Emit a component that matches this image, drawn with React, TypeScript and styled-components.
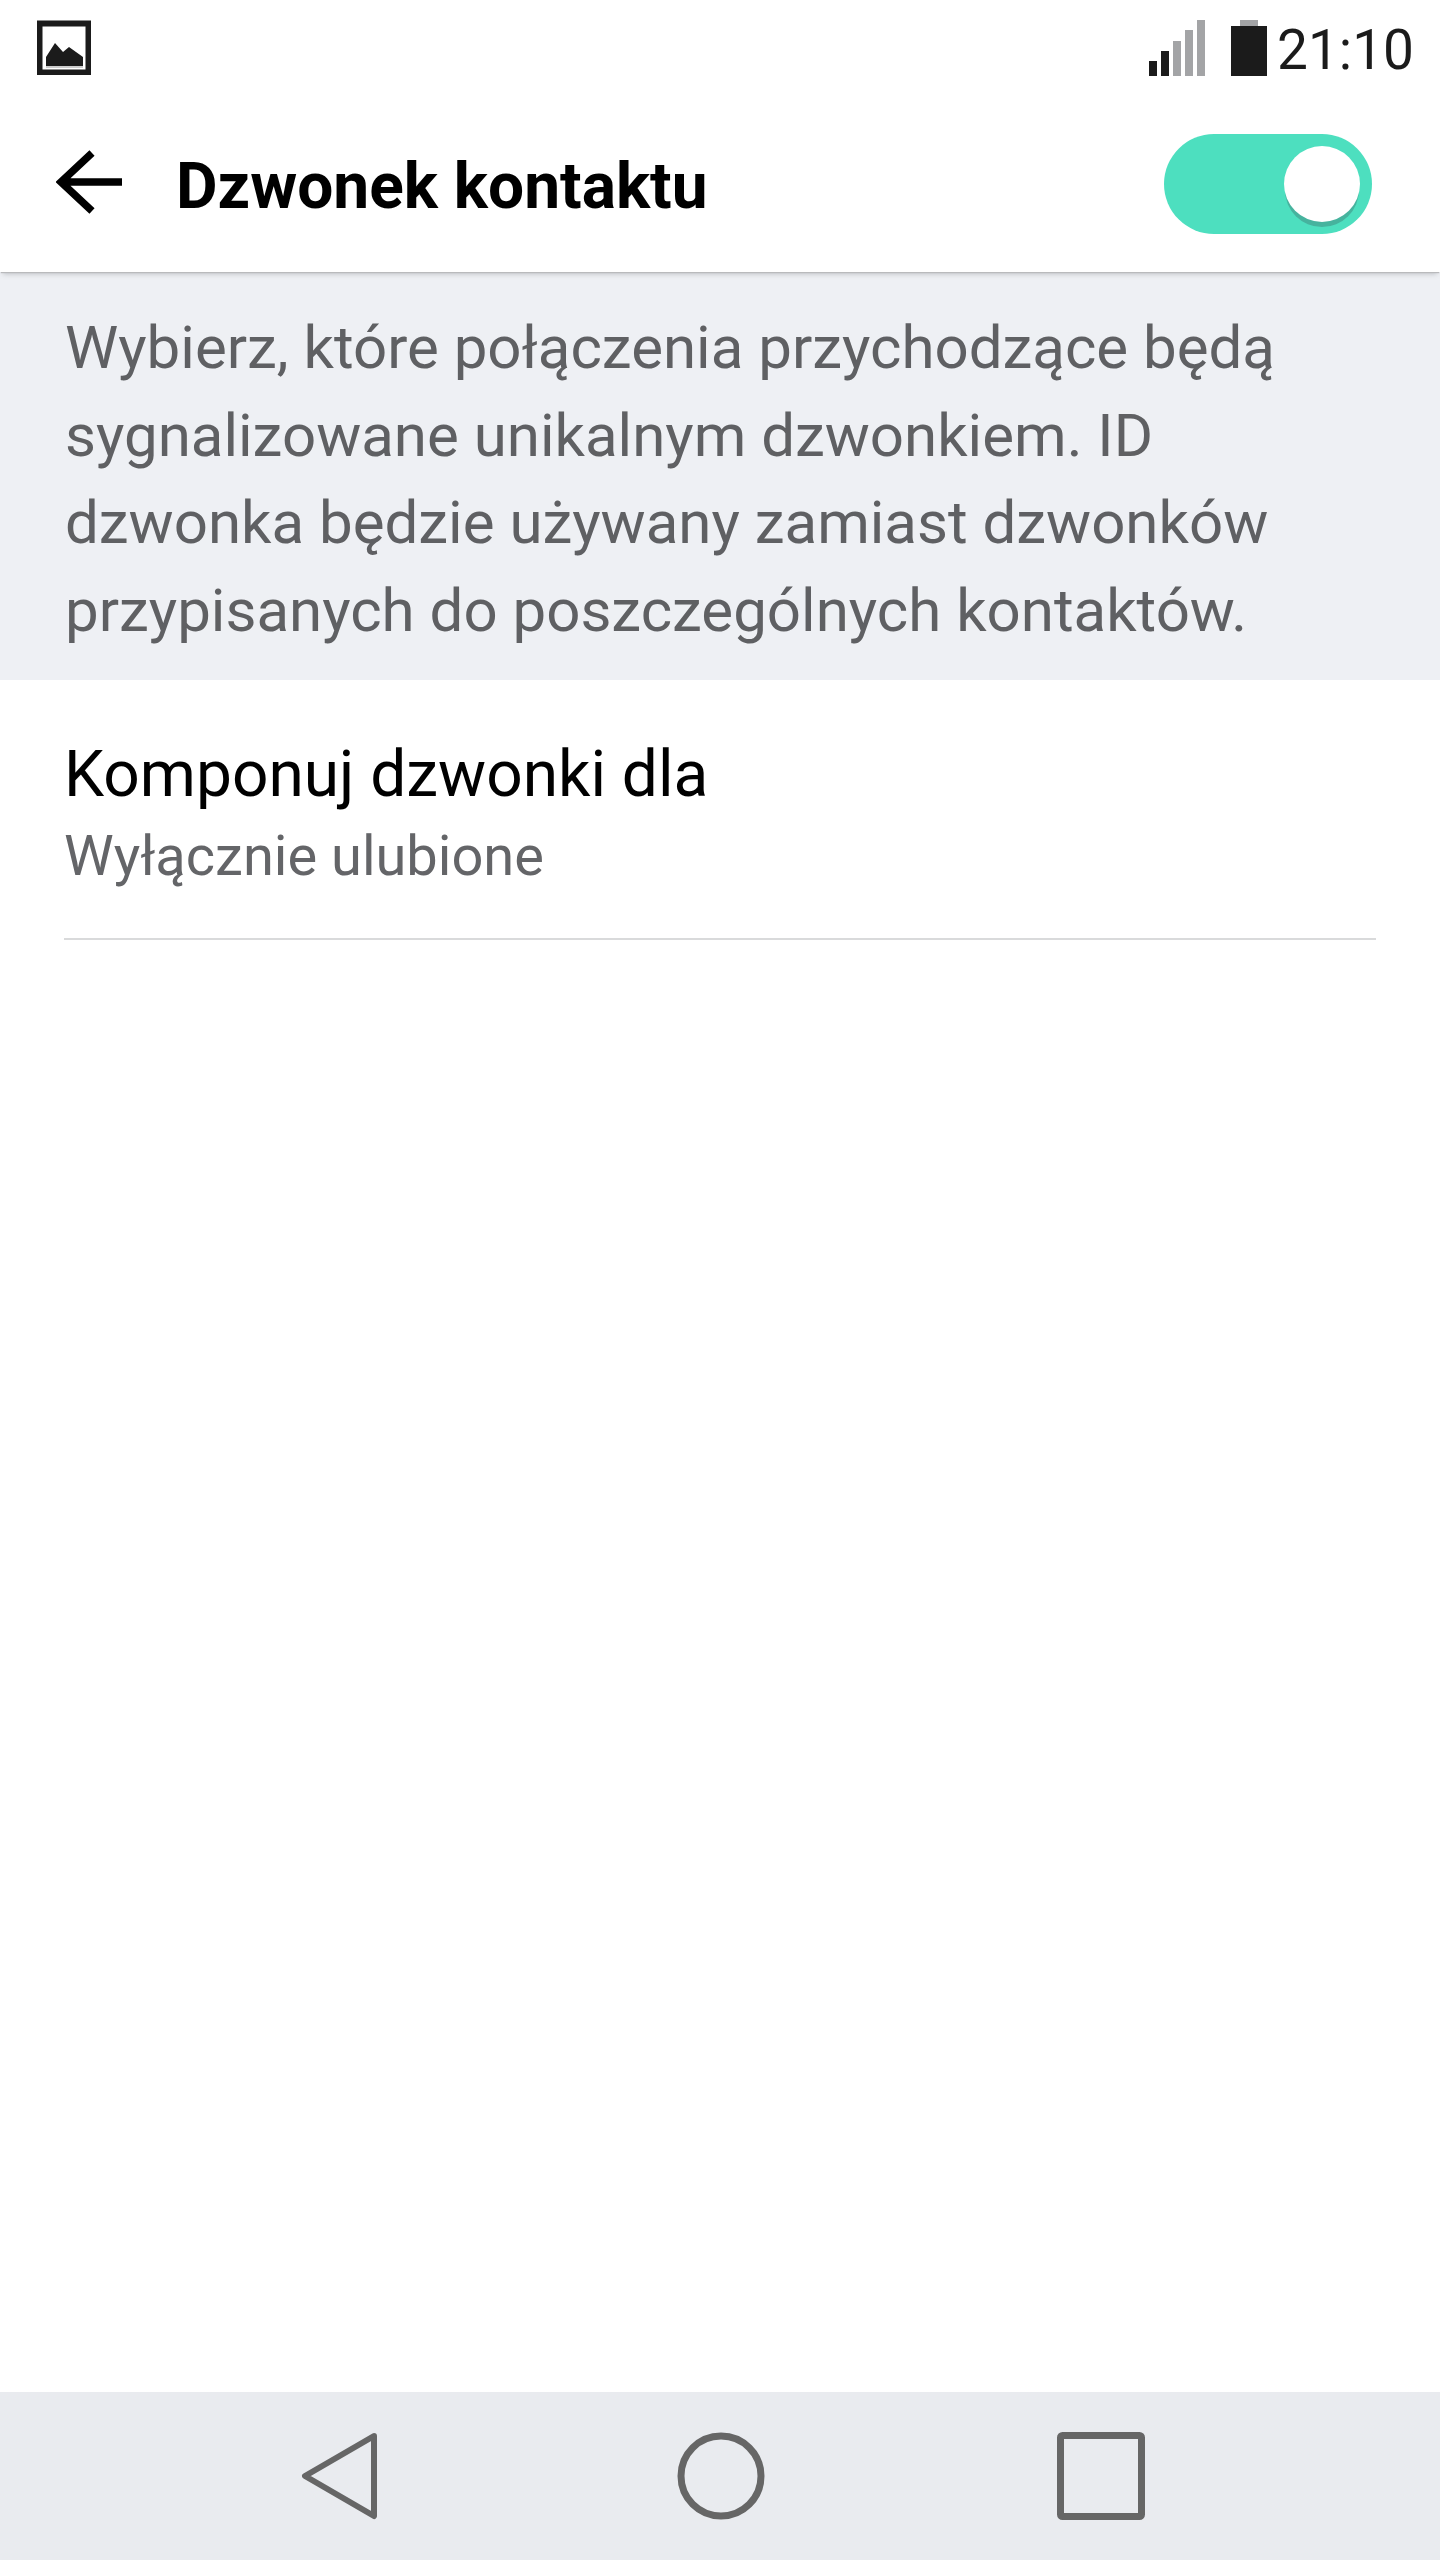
import React from "react";
import styled, { createGlobalStyle } from "styled-components";

const GlobalStyle = createGlobalStyle`
  html, body {
    margin: 0;
    padding: 0;
    background: #fff;
  }
  body {
    font-family: Roboto, "Liberation Sans", sans-serif;
  }
`;

const Screen = styled.div`
  width: 1440px;
  height: 2560px;
  display: flex;
  flex-direction: column;
  background: #fff;
  overflow: hidden;
`;

const StatusBar = styled.div`
  height: 84px;
  flex: none;
  display: flex;
  align-items: flex-start;
  justify-content: space-between;
  padding: 20px 26px 0 37px;
  box-sizing: border-box;
`;

const GalleryIcon = styled.svg`
  display: block;
`;

const StatusRight = styled.div`
  display: flex;
  align-items: flex-start;
`;

const SignalIcon = styled.svg`
  display: block;
  margin-right: 26px;
`;

const BatteryIcon = styled.svg`
  display: block;
  margin-right: 10px;
`;

const Clock = styled.span`
  font-size: 55px;
  line-height: 60px;
  color: #1b1b1b;
`;

const Toolbar = styled.div`
  position: relative;
  height: 188px;
  flex: none;
  display: flex;
  align-items: center;
  padding: 12px 68px 0 56px;
  box-sizing: border-box;
  background: #fff;
  box-shadow: 0 2px 1px -1px #b9babc, 0 5px 5px -3px rgba(120, 122, 128, 0.4);
`;

const BackIcon = styled.svg`
  display: block;
  flex: none;
  margin: -4px 54px 0 0;
`;

const Title = styled.h1`
  flex: 1;
  margin: 6px 0 0;
  font-size: 64px;
  font-weight: 700;
  line-height: 70px;
  color: #000;
`;

const Toggle = styled.div`
  position: relative;
  width: 208px;
  height: 100px;
  flex: none;
  border-radius: 50px;
  background: #4ddfbf;
`;

const Knob = styled.div`
  position: absolute;
  top: 12px;
  right: 12px;
  width: 76px;
  height: 76px;
  border-radius: 50%;
  background: #fff;
  box-shadow: 0 6px 0 -1px #46b39e;
`;

const Intro = styled.p`
  margin: 0;
  height: 408px;
  flex: none;
  padding: 32px 40px 0 65px;
  box-sizing: border-box;
  background: #eef0f4;
  font-size: 60px;
  line-height: 87.6px;
  color: #5f6063;
`;

const SettingRow = styled.div`
  flex: none;
  margin: 0 64px;
  height: 260px;
  padding-top: 60px;
  box-sizing: border-box;
  border-bottom: 2px solid #d9dadb;
`;

const RowTitle = styled.div`
  font-size: 64px;
  line-height: 70px;
  color: #000;
`;

const RowValue = styled.div`
  margin-top: 15px;
  font-size: 56px;
  line-height: 62px;
  color: #646568;
`;

const Spacer = styled.div`
  flex: 1;
`;

const NavBar = styled.div`
  height: 168px;
  flex: none;
  display: flex;
  align-items: center;
  justify-content: center;
  gap: 292px;
  padding-left: 6px;
  background: #e9ebef;
`;

const NavIcon = styled.svg`
  display: block;
  flex: none;
`;

const NavBackIcon = styled(NavIcon)`
  margin-right: 8px;
`;

function App() {
  return (
    <Screen>
      <GlobalStyle />
      <StatusBar>
        <GalleryIcon width="54" height="55" viewBox="0 0 54 55">
          <rect x="2.5" y="3.5" width="49" height="49" fill="none" stroke="#1b1b1b" strokeWidth="6" />
          <path d="M9 37 L18 23 L26 32 L32 27 L46 37 V46 H9 Z" fill="#1b1b1b" />
          <path d="M9 47 H46" stroke="#bdbdbd" strokeWidth="1.5" />
        </GalleryIcon>
        <StatusRight>
          <SignalIcon width="56" height="56" viewBox="0 0 56 56">
            <rect x="0" y="41" width="8" height="15" fill="#1b1b1b" />
            <rect x="12" y="31" width="8" height="25" fill="#1b1b1b" />
            <rect x="24" y="21" width="8" height="35" fill="#a3a4a6" />
            <rect x="36" y="10" width="8" height="46" fill="#a3a4a6" />
            <rect x="48" y="0" width="8" height="56" fill="#a3a4a6" />
          </SignalIcon>
          <BatteryIcon width="36" height="56" viewBox="0 0 36 56">
            <rect x="9" y="0" width="18" height="6" fill="#a3a4a6" />
            <rect x="0" y="6" width="36" height="50" fill="#1b1b1b" />
          </BatteryIcon>
          <Clock>21:10</Clock>
        </StatusRight>
      </StatusBar>
      <Toolbar>
        <BackIcon width="66" height="64" viewBox="0 0 66 64">
          <path d="M66 32 H8 M36 3 L5 32 L36 61" fill="none" stroke="#000" strokeWidth="7.5" />
        </BackIcon>
        <Title>Dzwonek kontaktu</Title>
        <Toggle>
          <Knob />
        </Toggle>
      </Toolbar>
      <Intro>
        Wybierz, które połączenia przychodzące będą
        <br />
        sygnalizowane unikalnym dzwonkiem. ID
        <br />
        dzwonka będzie używany zamiast dzwonków
        <br />
        przypisanych do poszczególnych kontaktów.
      </Intro>
      <SettingRow>
        <RowTitle>Komponuj dzwonki dla</RowTitle>
        <RowValue>Wyłącznie ulubione</RowValue>
      </SettingRow>
      <Spacer />
      <NavBar>
        <NavBackIcon width="76" height="88" viewBox="0 0 76 88">
          <path d="M73 4 L4 44 L73 84 Z" fill="none" stroke="#666" strokeWidth="6" strokeLinejoin="round" />
        </NavBackIcon>
        <NavIcon width="88" height="88" viewBox="0 0 88 88">
          <circle cx="44" cy="44" r="40" fill="none" stroke="#666" strokeWidth="7" />
        </NavIcon>
        <NavIcon width="88" height="88" viewBox="0 0 88 88">
          <rect x="3.5" y="3.5" width="81" height="81" rx="2" fill="none" stroke="#666" strokeWidth="7" />
        </NavIcon>
      </NavBar>
    </Screen>
  );
}

export default App;
